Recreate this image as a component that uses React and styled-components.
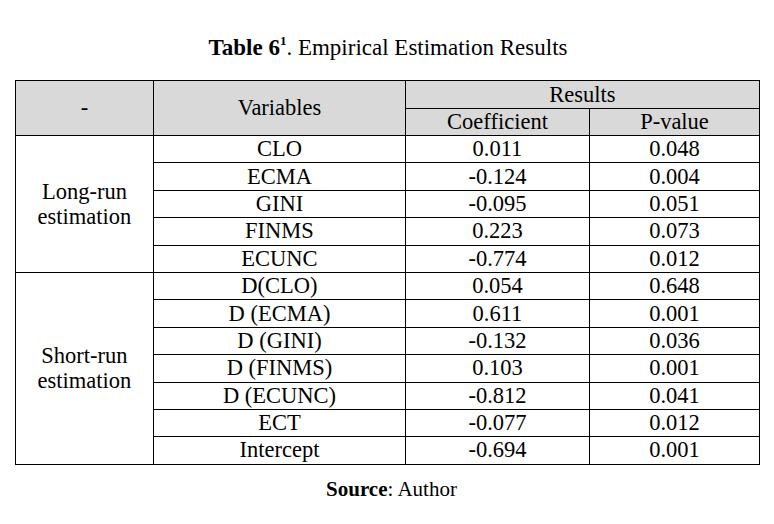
import React from "react";
import styled, { createGlobalStyle } from "styled-components";

const GlobalStyle = createGlobalStyle`
  html, body {
    margin: 0;
    padding: 0;
    background: #fff;
  }
  body {
    font-family: "Liberation Serif", "Times New Roman", serif;
    color: #000;
  }
`;

const Page = styled.div`
  width: 774px;
  height: 524px;
  display: flex;
  flex-direction: column;
  align-items: center;
  padding-top: 33px;
  box-sizing: border-box;
`;

const Title = styled.div`
  font-size: 23px;
  line-height: 30px;
  height: 30px;
  margin-left: 2px;
`;

const Bold = styled.b`
  font-weight: bold;
`;

const Sup = styled.sup`
  font-size: 13px;
  font-weight: bold;
  vertical-align: 10px;
  line-height: 0;
`;

const Table = styled.table`
  margin-top: 17px;
  margin-left: 1px;
  border-collapse: collapse;
  table-layout: fixed;
  width: 745px;
  font-size: 22.5px;
`;

const HeadCell = styled.th`
  background: #d9d9d9;
  border: 1px solid #000;
  font-weight: normal;
  text-align: center;
  padding: 0;
  line-height: 24px;
  height: ${(p) => p.$h || 26}px;
`;

const Cell = styled.td`
  border: 1px solid #000;
  text-align: center;
  padding: 0;
  line-height: 24px;
  height: 26.4px;
`;

const GroupCell = styled.td`
  border: 1px solid #000;
  text-align: center;
  padding: 0;
  line-height: 25px;
`;

const Source = styled.div`
  margin-top: 11px;
  margin-left: 9px;
  font-size: 21px;
  line-height: 26px;
`;

const groups = [
  {
    label: ["Long-run", "estimation"],
    rows: [
      ["CLO", "0.011", "0.048"],
      ["ECMA", "-0.124", "0.004"],
      ["GINI", "-0.095", "0.051"],
      ["FINMS", "0.223", "0.073"],
      ["ECUNC", "-0.774", "0.012"],
    ],
  },
  {
    label: ["Short-run", "estimation"],
    rows: [
      ["D(CLO)", "0.054", "0.648"],
      ["D (ECMA)", "0.611", "0.001"],
      ["D (GINI)", "-0.132", "0.036"],
      ["D (FINMS)", "0.103", "0.001"],
      ["D (ECUNC)", "-0.812", "0.041"],
      ["ECT", "-0.077", "0.012"],
      ["Intercept", "-0.694", "0.001"],
    ],
  },
];

export default function App() {
  return (
    <Page>
      <GlobalStyle />
      <Title>
        <Bold>
          Table 6<Sup>1</Sup>
        </Bold>
        . Empirical Estimation Results
      </Title>
      <Table>
        <colgroup>
          <col style={{ width: 138 }} />
          <col style={{ width: 252 }} />
          <col style={{ width: 184 }} />
          <col style={{ width: 170 }} />
        </colgroup>
        <thead>
          <tr>
            <HeadCell rowSpan={2}>-</HeadCell>
            <HeadCell rowSpan={2}>Variables</HeadCell>
            <HeadCell colSpan={2} $h={27}>
              Results
            </HeadCell>
          </tr>
          <tr>
            <HeadCell $h={26}>Coefficient</HeadCell>
            <HeadCell $h={26}>P-value</HeadCell>
          </tr>
        </thead>
        <tbody>
          {groups.map((g) =>
            g.rows.map((r, i) => (
              <tr key={g.label[0] + r[0]}>
                {i === 0 && (
                  <GroupCell rowSpan={g.rows.length}>
                    {g.label[0]}
                    <br />
                    {g.label[1]}
                  </GroupCell>
                )}
                <Cell>{r[0]}</Cell>
                <Cell>{r[1]}</Cell>
                <Cell>{r[2]}</Cell>
              </tr>
            ))
          )}
        </tbody>
      </Table>
      <Source>
        <Bold>Source</Bold>: Author
      </Source>
    </Page>
  );
}
